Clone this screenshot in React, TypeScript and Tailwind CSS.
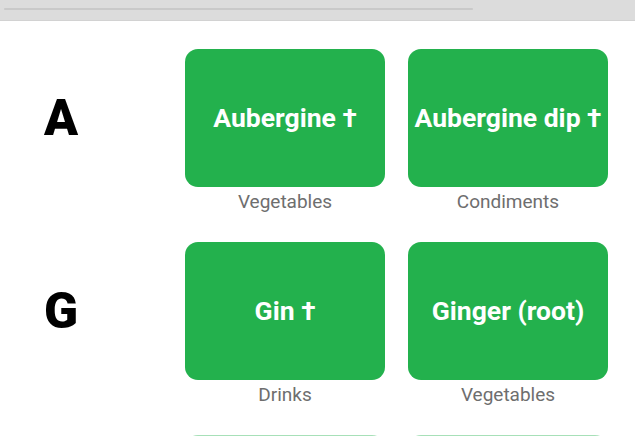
import React from "react";

type Item = { name: string; cat: string };
const rows: { letter: string; items: Item[] }[] = [
  { letter: "A", items: [{ name: "Aubergine †", cat: "Vegetables" }, { name: "Aubergine dip †", cat: "Condiments" }] },
  { letter: "G", items: [{ name: "Gin †", cat: "Drinks" }, { name: "Ginger (root)", cat: "Vegetables" }] },
];

export default function App() {
  return (
    <div className="w-[635px] h-[436px] overflow-hidden bg-white" style={{ fontFamily: "Roboto, 'Liberation Sans', sans-serif" }}>
      <div className="h-[21px] bg-[#dcdcdc] border-b border-[#d2d2d2] flex items-center pl-[4px]">
        <div className="w-[469px] h-[2px] rounded-full bg-[#c9c9c9] -mt-[2px]" />
      </div>
      <div className="pt-[28px] flex flex-col gap-[25px]">
        {rows.map((r) => (
          <div key={r.letter} className="flex">
            <div className="w-[122px] h-[138px] flex items-center justify-center flex-none">
              <span className="text-[50px] font-black text-black leading-none">{r.letter}</span>
            </div>
            <div className="ml-[63px] flex gap-[23px]">
              {r.items.map((it) => (
                <div key={it.name} className="w-[200px] flex flex-col items-center">
                  <div className="w-[200px] h-[138px] rounded-[13px] bg-[#23b14d] flex items-center justify-center">
                    <span className="text-white font-bold text-[26.5px] leading-none whitespace-nowrap">{it.name}</span>
                  </div>
                  <div className="h-[30px] flex items-center text-[19px] text-[#6e6e6e]">{it.cat}</div>
                </div>
              ))}
            </div>
          </div>
        ))}
        <div className="flex">
          <div className="w-[122px] flex-none" />
          <div className="ml-[63px] flex gap-[23px]">
            <div className="w-[200px] h-[138px] rounded-[13px] bg-[#23b14d] opacity-40" />
            <div className="w-[200px] h-[138px] rounded-[13px] bg-[#23b14d] opacity-40" />
          </div>
        </div>
      </div>
    </div>
  );
}
